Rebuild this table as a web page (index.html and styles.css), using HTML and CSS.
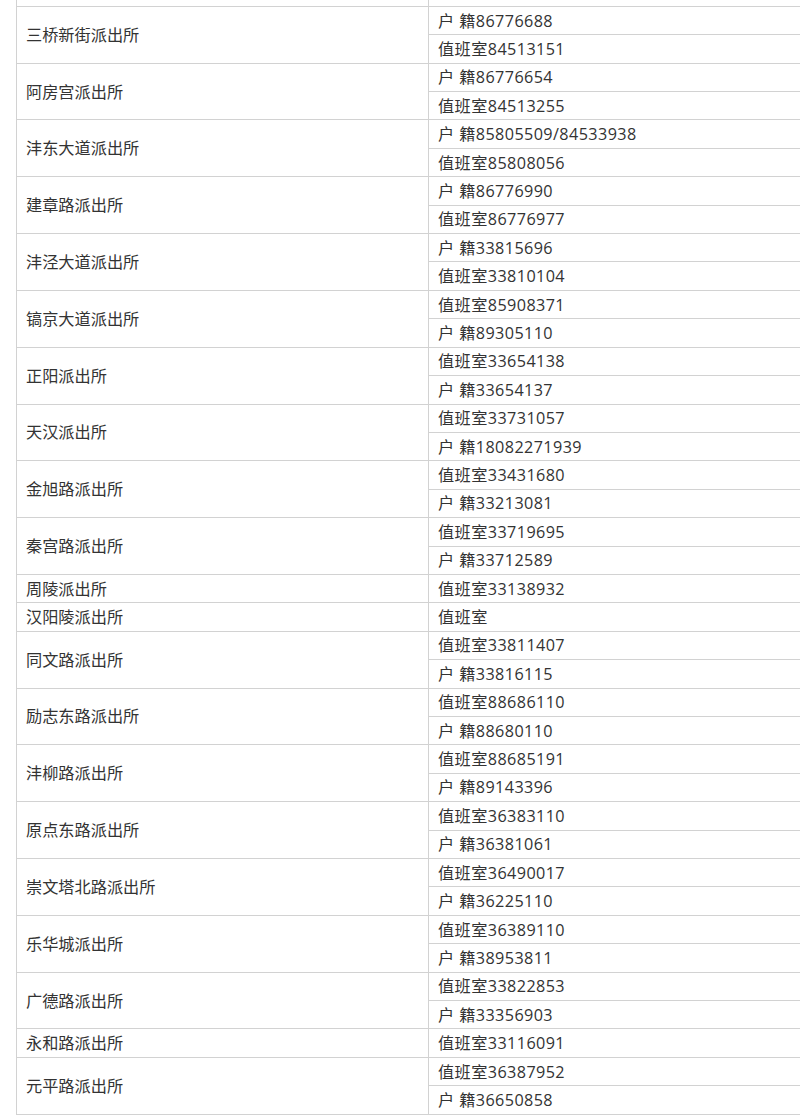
FILE: index.html
```html
<!DOCTYPE html>
<html lang="zh-CN">
<head>
<meta charset="utf-8">
<title>派出所电话</title>
<link rel="stylesheet" href="styles.css">
</head>
<body>
<table class="phone-table">
<tbody>
<tr><td class="name"></td><td class="num"></td></tr>
<tr><td class="name" rowspan="2">三桥新街派出所</td><td class="num">户 籍86776688</td></tr>
<tr><td class="num">值班室84513151</td></tr>
<tr><td class="name" rowspan="2">阿房宫派出所</td><td class="num">户 籍86776654</td></tr>
<tr><td class="num">值班室84513255</td></tr>
<tr><td class="name" rowspan="2">沣东大道派出所</td><td class="num">户 籍85805509/84533938</td></tr>
<tr><td class="num">值班室85808056</td></tr>
<tr><td class="name" rowspan="2">建章路派出所</td><td class="num">户 籍86776990</td></tr>
<tr><td class="num">值班室86776977</td></tr>
<tr><td class="name" rowspan="2">沣泾大道派出所</td><td class="num">户 籍33815696</td></tr>
<tr><td class="num">值班室33810104</td></tr>
<tr><td class="name" rowspan="2">镐京大道派出所</td><td class="num">值班室85908371</td></tr>
<tr><td class="num">户 籍89305110</td></tr>
<tr><td class="name" rowspan="2">正阳派出所</td><td class="num">值班室33654138</td></tr>
<tr><td class="num">户 籍33654137</td></tr>
<tr><td class="name" rowspan="2">天汉派出所</td><td class="num">值班室33731057</td></tr>
<tr><td class="num">户 籍18082271939</td></tr>
<tr><td class="name" rowspan="2">金旭路派出所</td><td class="num">值班室33431680</td></tr>
<tr><td class="num">户 籍33213081</td></tr>
<tr><td class="name" rowspan="2">秦宫路派出所</td><td class="num">值班室33719695</td></tr>
<tr><td class="num">户 籍33712589</td></tr>
<tr><td class="name">周陵派出所</td><td class="num">值班室33138932</td></tr>
<tr><td class="name">汉阳陵派出所</td><td class="num">值班室</td></tr>
<tr><td class="name" rowspan="2">同文路派出所</td><td class="num">值班室33811407</td></tr>
<tr><td class="num">户 籍33816115</td></tr>
<tr><td class="name" rowspan="2">励志东路派出所</td><td class="num">值班室88686110</td></tr>
<tr><td class="num">户 籍88680110</td></tr>
<tr><td class="name" rowspan="2">沣柳路派出所</td><td class="num">值班室88685191</td></tr>
<tr><td class="num">户 籍89143396</td></tr>
<tr><td class="name" rowspan="2">原点东路派出所</td><td class="num">值班室36383110</td></tr>
<tr><td class="num">户 籍36381061</td></tr>
<tr><td class="name" rowspan="2">崇文塔北路派出所</td><td class="num">值班室36490017</td></tr>
<tr><td class="num">户 籍36225110</td></tr>
<tr><td class="name" rowspan="2">乐华城派出所</td><td class="num">值班室36389110</td></tr>
<tr><td class="num">户 籍38953811</td></tr>
<tr><td class="name" rowspan="2">广德路派出所</td><td class="num">值班室33822853</td></tr>
<tr><td class="num">户 籍33356903</td></tr>
<tr><td class="name">永和路派出所</td><td class="num">值班室33116091</td></tr>
<tr><td class="name" rowspan="2">元平路派出所</td><td class="num">值班室36387952</td></tr>
<tr><td class="num">户 籍36650858</td></tr>
</tbody>
</table>
</body>
</html>
```

FILE: styles.css
```css
html, body {
  margin: 0;
  padding: 0;
  background: #fff;
  overflow: hidden;
}
body {
  padding-left: 16px;
  font-family: "Open Sans", "Noto Sans CJK SC", sans-serif;
  font-size: 16.2px;
  color: #333;
}
.phone-table {
  border-collapse: collapse;
  width: 820px;
  margin-top: -22.6px;
  table-layout: fixed;
}
.phone-table tr {
  height: 28.41px;
}
.phone-table td {
  border: 1px solid #d2d2d2;
  padding: 0 9px;
  vertical-align: middle;
  line-height: 20px;
  white-space: nowrap;
}
.phone-table td.num {
  letter-spacing: 0.4px;
}
.phone-table td.name {
  width: 393px;
}
```
